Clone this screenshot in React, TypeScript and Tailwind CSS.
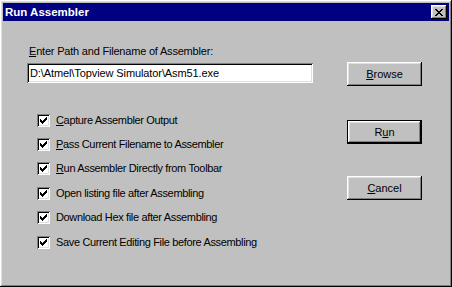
import React from 'react';

const raised =
  'shadow-[inset_-1px_-1px_#000,inset_1px_1px_#fff,inset_-2px_-2px_#808080,inset_2px_2px_#dfdfdf]';
const sunken =
  'shadow-[inset_1px_1px_#808080,inset_-1px_-1px_#fff,inset_2px_2px_#000,inset_-2px_-2px_#dfdfdf]';

type Option = { pre: string; key: string; post: string };

const OPTIONS: Option[] = [
  { pre: '', key: 'C', post: 'apture Assembler Output' },
  { pre: '', key: 'P', post: 'ass Current Filename to Assembler' },
  { pre: '', key: 'R', post: 'un Assembler Directly from Toolbar' },
  { pre: 'Open listing file after Assembling', key: '', post: '' },
  { pre: 'Download Hex file after Assembling', key: '', post: '' },
  { pre: 'Save Current Editing File before Assembling', key: '', post: '' },
];

function CheckBox() {
  return (
    <span className={`w-[13px] h-[13px] bg-white flex items-center justify-center shrink-0 ${sunken}`}>
      <svg width="7" height="7" viewBox="0 0 7 7" shapeRendering="crispEdges">
        <path
          d="M0 2h1v3h-1zM1 3h1v3h-1zM2 4h1v3h-1zM3 3h1v3h-1zM4 2h1v3h-1zM5 1h1v3h-1zM6 0h1v3h-1z"
          fill="#000"
        />
      </svg>
    </span>
  );
}

function Button({ label, mnemonic, isDefault }: { label: string; mnemonic: number; isDefault?: boolean }) {
  const before = label.slice(0, mnemonic);
  const key = label[mnemonic];
  const after = label.slice(mnemonic + 1);
  return (
    <div className={isDefault ? 'border border-black' : ''}>
      <button
        className={`bg-[#c0c0c0] flex items-center justify-center ${raised} ${
          isDefault ? 'w-[73px] h-[22px]' : 'w-[75px] h-[24px]'
        }`}
      >
        <span>
          {before}
          <span className="underline underline-offset-1">{key}</span>
          {after}
        </span>
      </button>
    </div>
  );
}

export default function App() {
  return (
    <div
      className={`w-[452px] h-[287px] bg-[#c0c0c0] p-[3px] flex flex-col text-black text-[11px] leading-[13px] tracking-[-0.35px] ${raised}`}
      style={{ fontFamily: '"Liberation Sans", Arial, sans-serif' }}
    >
      {/* title bar */}
      <div className="h-[18px] bg-[#000080] flex items-center justify-between pl-[2px] pr-[2px]">
        <span className="text-white font-bold text-[11.5px] tracking-[0px]">Run Assembler</span>
        <button className={`w-[16px] h-[14px] bg-[#c0c0c0] flex items-center justify-center ${raised}`}>
          <svg width="8" height="7" viewBox="0 0 8 7" shapeRendering="crispEdges">
            <path
              d="M0 0h2v1h-2zM6 0h2v1h-2zM1 1h2v1h-2zM5 1h2v1h-2zM2 2h4v1h-4zM3 3h2v1h-2zM2 4h4v1h-4zM1 5h2v1h-2zM5 5h2v1h-2zM0 6h2v1h-2zM6 6h2v1h-2z"
              fill="#000"
            />
          </svg>
        </button>
      </div>

      <div className="flex pl-[24px]">
        {/* left column */}
        <div className="flex flex-col w-[286px]">
          <div className="mt-[24px] ml-[2px] tracking-[-0.2px]">
            <span className="underline underline-offset-1">E</span>nter Path and Filename of Assembler:
          </div>
          <div className={`mt-[5px] h-[20px] bg-white flex items-center pl-[3px] tracking-[-0.1px] ${sunken}`}>
            D:\Atmel\Topview Simulator\Asm51.exe
          </div>
          <div className="mt-[25px] flex flex-col pl-[10px]">
            {OPTIONS.map((o) => (
              <div key={o.pre + o.post} className="h-[24.4px] flex items-center gap-[6px]">
                <CheckBox />
                <span className="whitespace-nowrap">
                  {o.pre}
                  {o.key && <span className="underline underline-offset-1">{o.key}</span>}
                  {o.post}
                </span>
              </div>
            ))}
          </div>
        </div>

        {/* right column */}
        <div className="flex flex-col ml-[34px] mt-[41px] tracking-[0px]">
          <Button label="Browse" mnemonic={0} />
          <div className="mt-[34px]">
            <Button label="Run" mnemonic={1} isDefault />
          </div>
          <div className="mt-[32px]">
            <Button label="Cancel" mnemonic={0} />
          </div>
        </div>
      </div>
    </div>
  );
}
